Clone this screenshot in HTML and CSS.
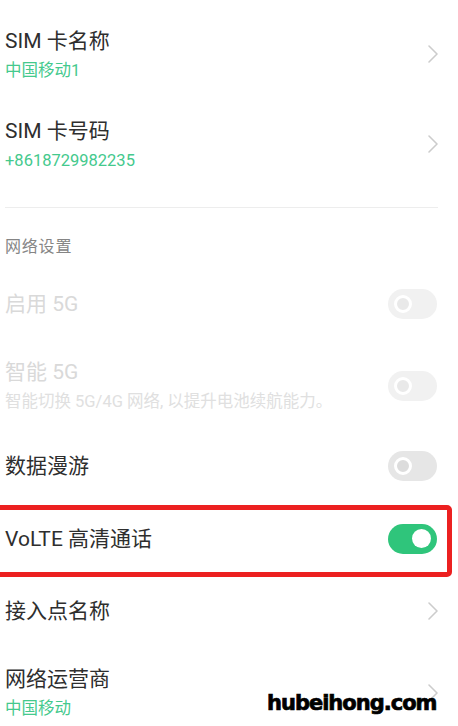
FILE: index.html
```html
<!DOCTYPE html>
<html lang="zh-CN">
<head>
<meta charset="utf-8">
<title>SIM 卡设置</title>
<link rel="stylesheet" href="styles.css">
</head>
<body>
<div class="screen">
  <div class="row row-sim">
    <div class="text">
      <div class="title">SIM 卡名称</div>
      <div class="sub green">中国移动1</div>
    </div>
    <svg class="chev" viewBox="0 0 12 20" width="12" height="20"><polyline points="2,2 10,10 2,18"/></svg>
  </div>
  <div class="row row-sim">
    <div class="text">
      <div class="title">SIM 卡号码</div>
      <div class="sub green">+8618729982235</div>
    </div>
    <svg class="chev" viewBox="0 0 12 20" width="12" height="20"><polyline points="2,2 10,10 2,18"/></svg>
  </div>

  <div class="divider"></div>
  <div class="section">网络设置</div>

  <div class="row row-5g">
    <div class="text">
      <div class="title disabled">启用 5G</div>
    </div>
    <span class="switch switch-disabled"><span class="knob"></span></span>
  </div>
  <div class="row row-smart">
    <div class="text">
      <div class="title disabled">智能 5G</div>
      <div class="sub sub-disabled">智能切换 5G/4G 网络, 以提升电池续航能力。</div>
    </div>
    <span class="switch switch-disabled"><span class="knob"></span></span>
  </div>
  <div class="row row-roam">
    <div class="text">
      <div class="title">数据漫游</div>
    </div>
    <span class="switch"><span class="knob"></span></span>
  </div>
  <div class="row row-volte">
    <div class="text">
      <div class="title">VoLTE 高清通话</div>
    </div>
    <span class="switch switch-on"><span class="knob"></span></span>
    <div class="highlight"></div>
  </div>
  <div class="row row-apn">
    <div class="text">
      <div class="title">接入点名称</div>
    </div>
    <svg class="chev" viewBox="0 0 12 20" width="12" height="20"><polyline points="2,2 10,10 2,18"/></svg>
  </div>
  <div class="row row-op">
    <div class="text">
      <div class="title">网络运营商</div>
      <div class="sub green">中国移动</div>
    </div>
    <svg class="chev" viewBox="0 0 12 20" width="12" height="20"><polyline points="2,2 10,10 2,18"/></svg>
  </div>

  <div class="watermark">hubeihong.com</div>
</div>
</body>
</html>
```

FILE: styles.css
```css
* { box-sizing: border-box; }

html, body {
  margin: 0;
  padding: 0;
  background: #ffffff;
}

.screen {
  position: relative;
  width: 458px;
  height: 726px;
  overflow: hidden;
  padding-top: 9px;
  font-family: "Roboto", "Noto Sans CJK SC", sans-serif;
  color: #303030;
}

.row {
  position: relative;
  display: flex;
  align-items: center;
  justify-content: space-between;
  padding: 0 19px 0 5px;
}

.row-sim { height: 90px; }
.row-5g { height: 72px; }
.row-smart { height: 91px; }
.row-roam { height: 70px; }
.row-volte { height: 75px; }
.row-apn { height: 70px; }
.row-op { height: 93px; }

.text {
  display: flex;
  flex-direction: column;
}

.title {
  font-size: 21px;
  line-height: 28px;
  color: #2e2e2e;
  white-space: nowrap;
}

.title.disabled { color: #d9d9d9; }

.sub {
  margin-top: 5px;
  font-size: 16.5px;
  line-height: 22px;
  white-space: nowrap;
}

.green { color: #44c98d; }
.sub-disabled { color: #e0e0e0; }

.chev {
  flex: none;
  fill: none;
  stroke: #cccccc;
  stroke-width: 1.6;
  stroke-linecap: round;
  stroke-linejoin: round;
}

.divider {
  margin: 18px 20px 0 5px;
  height: 1px;
  background: #ededed;
}

.section {
  margin: 29px 0 11px 5px;
  font-size: 16px;
  line-height: 20px;
  color: #858585;
  letter-spacing: 0.8px;
}

.switch {
  flex: none;
  position: relative;
  display: flex;
  align-items: center;
  width: 49px;
  height: 30px;
  margin-right: 2px;
  border-radius: 15px;
  background: #e6e6e6;
  padding-left: 6px;
}

.switch .knob {
  width: 18px;
  height: 18px;
  border-radius: 50%;
  border: 3.5px solid #ffffff;
  background: #dcdcdc;
}

.switch-disabled { background: #f1f1f1; }
.switch-disabled .knob { background: #e9e9e9; }

.switch-on {
  background: #2fc57b;
  justify-content: flex-end;
  padding: 0 6px 0 0;
}

.switch-on .knob {
  width: 19px;
  height: 19px;
  border: none;
  background: #ffffff;
}

.highlight {
  position: absolute;
  top: 4px;
  bottom: -1px;
  left: -10px;
  right: 6px;
  border: 5px solid #ec2020;
  border-radius: 5px;
  pointer-events: none;
}

.watermark {
  position: absolute;
  left: 267px;
  top: 691px;
  font-family: "DejaVu Sans", sans-serif;
  font-weight: bold;
  font-size: 21px;
  line-height: 24px;
  letter-spacing: -1px;
  color: #000000;
  -webkit-text-stroke: 0.7px #000000;
}
```
